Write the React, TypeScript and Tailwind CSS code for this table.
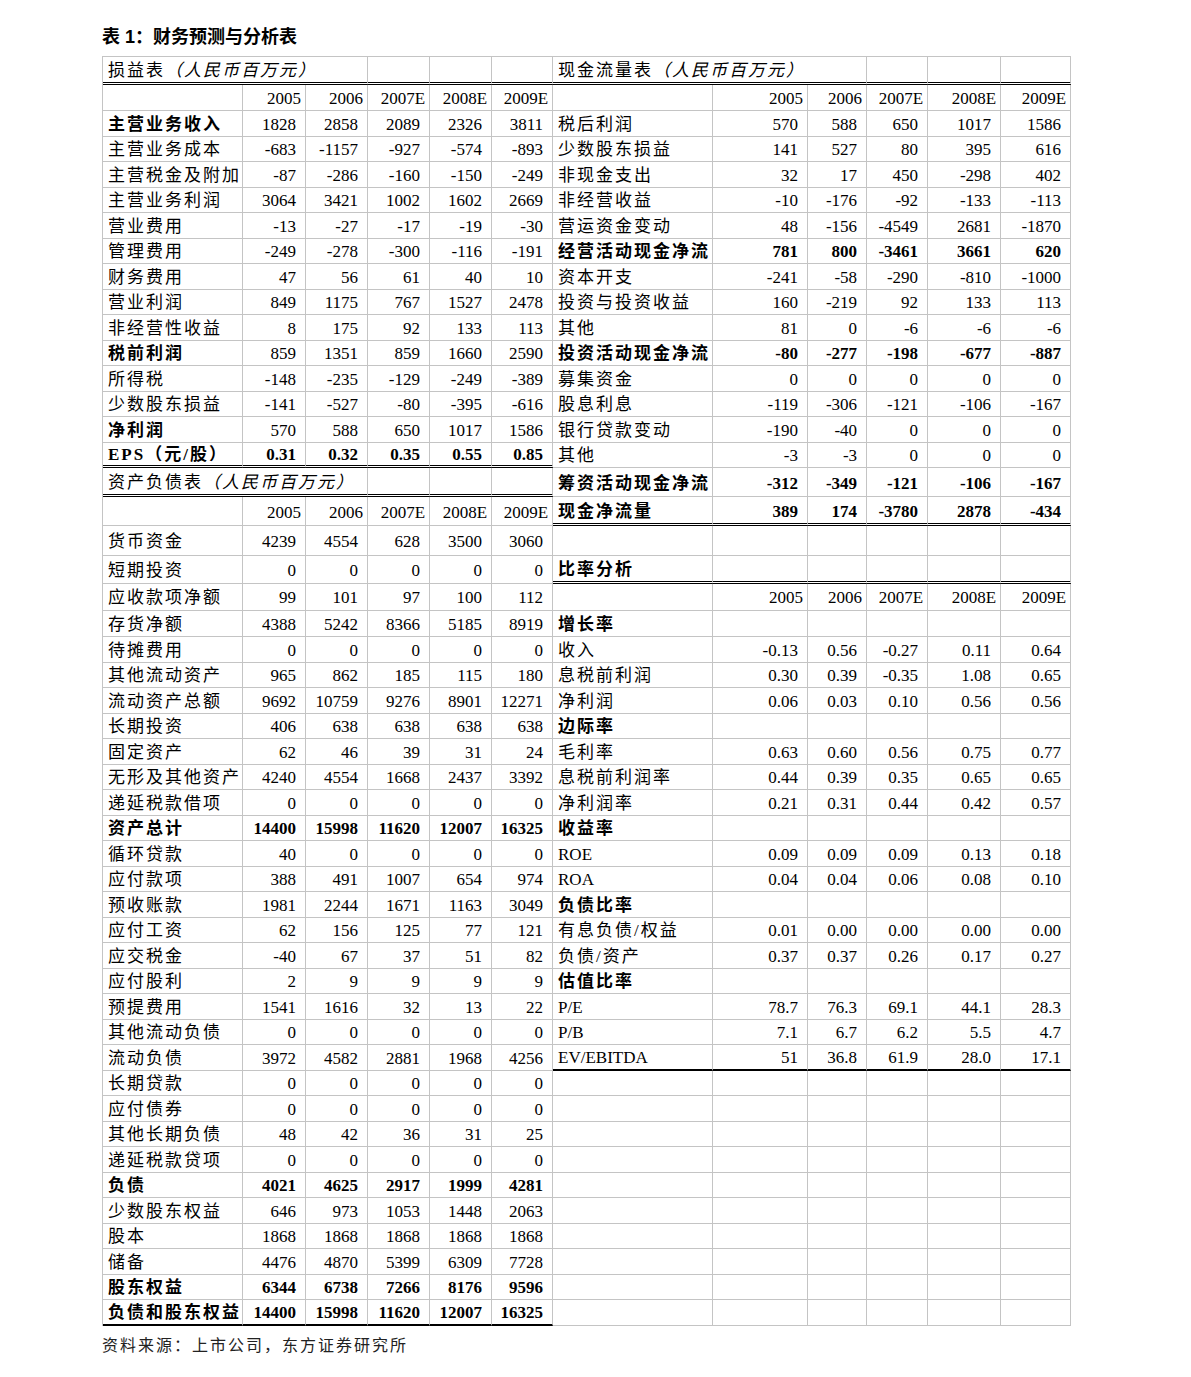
import React from "react";

type Row =
  | { k: "title"; main: string; sub: string }
  | { k: "years" }
  | { k: "data"; label: string; vals: string[]; b?: 0 | 1 | 2 }
  | { k: "section"; label: string }
  | { k: "empty" };

const YEARS = ["2005", "2006", "2007E", "2008E", "2009E"];

const d = (label: string, s: string, b: 0 | 1 | 2 = 0): Row => ({ k: "data", label, vals: s.split(" "), b });

const leftRows: Row[] = [
  { k: "title", main: "损益表", sub: "（人民币百万元）" },
  { k: "years" },
  d("主营业务收入", "1828 2858 2089 2326 3811", 1),
  d("主营业务成本", "-683 -1157 -927 -574 -893"),
  d("主营税金及附加", "-87 -286 -160 -150 -249"),
  d("主营业务利润", "3064 3421 1002 1602 2669"),
  d("营业费用", "-13 -27 -17 -19 -30"),
  d("管理费用", "-249 -278 -300 -116 -191"),
  d("财务费用", "47 56 61 40 10"),
  d("营业利润", "849 1175 767 1527 2478"),
  d("非经营性收益", "8 175 92 133 113"),
  d("税前利润", "859 1351 859 1660 2590", 1),
  d("所得税", "-148 -235 -129 -249 -389"),
  d("少数股东损益", "-141 -527 -80 -395 -616"),
  d("净利润", "570 588 650 1017 1586", 1),
  d("EPS（元/股）", "0.31 0.32 0.35 0.55 0.85", 2),
  { k: "title", main: "资产负债表", sub: "（人民币百万元）" },
  { k: "years" },
  d("货币资金", "4239 4554 628 3500 3060"),
  d("短期投资", "0 0 0 0 0"),
  d("应收款项净额", "99 101 97 100 112"),
  d("存货净额", "4388 5242 8366 5185 8919"),
  d("待摊费用", "0 0 0 0 0"),
  d("其他流动资产", "965 862 185 115 180"),
  d("流动资产总额", "9692 10759 9276 8901 12271"),
  d("长期投资", "406 638 638 638 638"),
  d("固定资产", "62 46 39 31 24"),
  d("无形及其他资产", "4240 4554 1668 2437 3392"),
  d("递延税款借项", "0 0 0 0 0"),
  d("资产总计", "14400 15998 11620 12007 16325", 2),
  d("循环贷款", "40 0 0 0 0"),
  d("应付款项", "388 491 1007 654 974"),
  d("预收账款", "1981 2244 1671 1163 3049"),
  d("应付工资", "62 156 125 77 121"),
  d("应交税金", "-40 67 37 51 82"),
  d("应付股利", "2 9 9 9 9"),
  d("预提费用", "1541 1616 32 13 22"),
  d("其他流动负债", "0 0 0 0 0"),
  d("流动负债", "3972 4582 2881 1968 4256"),
  d("长期贷款", "0 0 0 0 0"),
  d("应付债券", "0 0 0 0 0"),
  d("其他长期负债", "48 42 36 31 25"),
  d("递延税款贷项", "0 0 0 0 0"),
  d("负债", "4021 4625 2917 1999 4281", 2),
  d("少数股东权益", "646 973 1053 1448 2063"),
  d("股本", "1868 1868 1868 1868 1868"),
  d("储备", "4476 4870 5399 6309 7728"),
  d("股东权益", "6344 6738 7266 8176 9596", 2),
  d("负债和股东权益", "14400 15998 11620 12007 16325", 2),
];

const rightRows: Row[] = [
  { k: "title", main: "现金流量表", sub: "（人民币百万元）" },
  { k: "years" },
  d("税后利润", "570 588 650 1017 1586"),
  d("少数股东损益", "141 527 80 395 616"),
  d("非现金支出", "32 17 450 -298 402"),
  d("非经营收益", "-10 -176 -92 -133 -113"),
  d("营运资金变动", "48 -156 -4549 2681 -1870"),
  d("经营活动现金净流", "781 800 -3461 3661 620", 2),
  d("资本开支", "-241 -58 -290 -810 -1000"),
  d("投资与投资收益", "160 -219 92 133 113"),
  d("其他", "81 0 -6 -6 -6"),
  d("投资活动现金净流", "-80 -277 -198 -677 -887", 2),
  d("募集资金", "0 0 0 0 0"),
  d("股息利息", "-119 -306 -121 -106 -167"),
  d("银行贷款变动", "-190 -40 0 0 0"),
  d("其他", "-3 -3 0 0 0"),
  d("筹资活动现金净流", "-312 -349 -121 -106 -167", 2),
  d("现金净流量", "389 174 -3780 2878 -434", 2),
  { k: "empty" },
  { k: "section", label: "比率分析" },
  { k: "years" },
  { k: "section", label: "增长率" },
  d("收入", "-0.13 0.56 -0.27 0.11 0.64"),
  d("息税前利润", "0.30 0.39 -0.35 1.08 0.65"),
  d("净利润", "0.06 0.03 0.10 0.56 0.56"),
  { k: "section", label: "边际率" },
  d("毛利率", "0.63 0.60 0.56 0.75 0.77"),
  d("息税前利润率", "0.44 0.39 0.35 0.65 0.65"),
  d("净利润率", "0.21 0.31 0.44 0.42 0.57"),
  { k: "section", label: "收益率" },
  d("ROE", "0.09 0.09 0.09 0.13 0.18"),
  d("ROA", "0.04 0.04 0.06 0.08 0.10"),
  { k: "section", label: "负债比率" },
  d("有息负债/权益", "0.01 0.00 0.00 0.00 0.00"),
  d("负债/资产", "0.37 0.37 0.26 0.17 0.27"),
  { k: "section", label: "估值比率" },
  d("P/E", "78.7 76.3 69.1 44.1 28.3"),
  d("P/B", "7.1 6.7 6.2 5.5 4.7"),
  d("EV/EBITDA", "51 36.8 61.9 28.0 17.1"),
  ...Array.from({ length: 10 }, (): Row => ({ k: "empty" })),
];

// row heights in px, taken from the reference
const heights: number[] = [
  28, 26,
  ...Array(14).fill(25.5),
  29, 29, 30, 27.5, 27.5, 26,
  ...Array(27).fill(25.5),
];

type Edge = "double" | "black" | null;
const leftEdge = (i: number): Edge => (i === 0 || i === 15 || i === 16 ? "double" : i === 48 ? "black" : null);
const rightEdge = (i: number): Edge => (i === 0 || i === 17 || i === 19 ? "double" : i === 38 ? "black" : null);

const edgeClass = (e: Edge) =>
  e === "double"
    ? "border-r border-b-[3px] border-double border-[#c4c4c4] border-b-black"
    : e === "black"
    ? "border-r border-b-2 border-[#c4c4c4] border-b-black"
    : "border-r border-b border-[#c4c4c4]";

const hasCjk = (s: string) => /[\u3000-\u9fff\uff00-\uffef]/.test(s);

function Part({ row, edge }: { row: Row; edge: Edge }) {
  const bc = `${edgeClass(edge)} pt-[2px]`;
  const empty = (n: number) =>
    Array.from({ length: n }, (_, i) => <td key={"e" + i} className={bc} />);

  if (row.k === "title") {
    return (
      <>
        <td colSpan={3} className={`${bc} pl-[5px] whitespace-nowrap tracking-[2px]`}>
          {row.main}
          <span className="italic">{row.sub}</span>
        </td>
        {empty(3)}
      </>
    );
  }
  if (row.k === "years") {
    return (
      <>
        <td className={bc} />
        {YEARS.map((y) => (
          <td key={y} className={`${bc} pr-[4px] text-right whitespace-nowrap`}>
            {y}
          </td>
        ))}
      </>
    );
  }
  if (row.k === "section") {
    return (
      <>
        <td className={`${bc} pl-[5px] font-bold tracking-[2px] whitespace-nowrap`}>{row.label}</td>
        {empty(5)}
      </>
    );
  }
  if (row.k === "empty") return <>{empty(6)}</>;

  const labelBold = row.b ? "font-bold" : "";
  const numBold = row.b === 2 ? "font-bold" : "";
  return (
    <>
      <td
        className={`${bc} pl-[5px] whitespace-nowrap ${labelBold} ${hasCjk(row.label) ? "tracking-[2px]" : ""}`}
      >
        {row.label}
      </td>
      {row.vals.map((v, i) => (
        <td key={i} className={`${bc} pr-[9px] text-right whitespace-nowrap ${numBold}`}>
          {v}
        </td>
      ))}
    </>
  );
}

export default function App() {
  const widths = ["w-[140px]", "w-[63px]", "w-[62px]", "w-[62px]", "w-[62px]", "w-[61px]", "w-[160px]", "w-[95px]", "w-[59px]", "w-[61px]", "w-[73px]", "w-[70px]"];
  return (
    <div className="min-h-screen bg-white pt-[26px] pl-[102px] text-black [font-family:'Liberation_Serif','Noto_Sans_CJK_SC',serif]">
      <h1 className="text-[18px] leading-[22px] font-bold [font-family:'Liberation_Sans','Noto_Sans_CJK_SC',sans-serif]">
        表 1：财务预测与分析表
      </h1>

      <table className="mt-[8px] w-[969px] table-fixed border-separate border-spacing-0 border-l border-t border-[#c4c4c4] text-[17px] leading-none">
        <colgroup>
          {widths.map((w, i) => (
            <col key={i} className={w} />
          ))}
        </colgroup>
        <tbody>
          {leftRows.map((lr, i) => (
            <tr key={i} style={{ height: heights[i] }}>
              <Part row={lr} edge={leftEdge(i)} />
              <Part row={rightRows[i]} edge={rightEdge(i)} />
            </tr>
          ))}
        </tbody>
      </table>

      <p className="mt-[10px] text-[16px] leading-[20px] tracking-[2px] text-[#222]">
        资料来源：上市公司，东方证券研究所
      </p>
    </div>
  );
}
